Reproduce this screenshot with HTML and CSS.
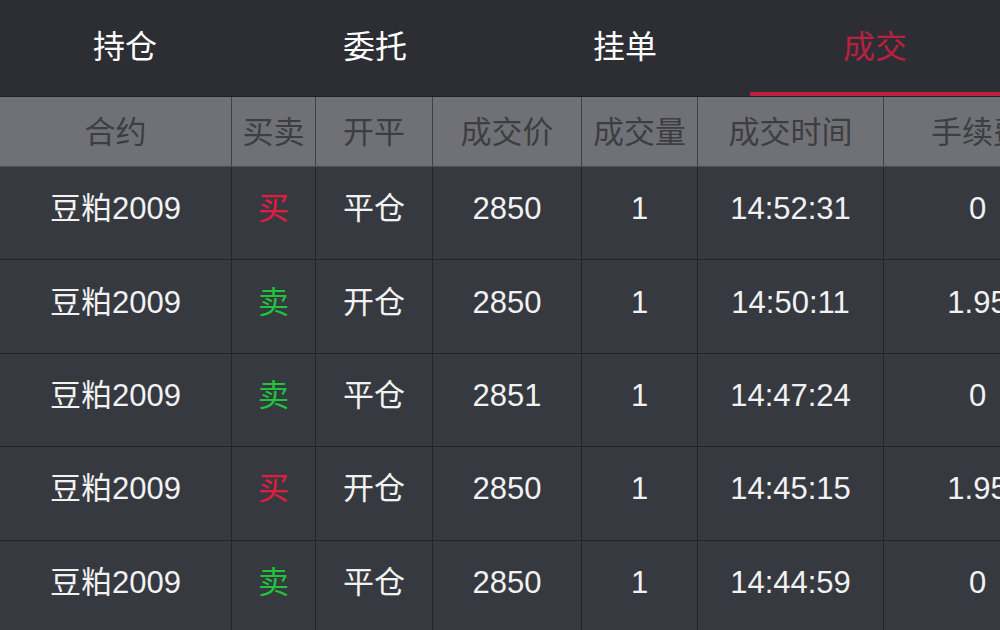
FILE: index.html
```html
<!DOCTYPE html>
<html lang="zh">
<head>
<meta charset="utf-8">
<title>成交</title>
<link rel="stylesheet" href="styles.css">
</head>
<body>
<div class="app">
  <nav class="tabs">
    <div class="tab">持仓</div>
    <div class="tab">委托</div>
    <div class="tab">挂单</div>
    <div class="tab active">成交</div>
  </nav>
  <div class="table">
    <div class="row head">
      <div class="cell">合约</div>
      <div class="cell">买卖</div>
      <div class="cell">开平</div>
      <div class="cell">成交价</div>
      <div class="cell">成交量</div>
      <div class="cell">成交时间</div>
      <div class="cell">手续费</div>
    </div>
    <div class="row">
      <div class="cell">豆粕2009</div>
      <div class="cell buy">买</div>
      <div class="cell">平仓</div>
      <div class="cell">2850</div>
      <div class="cell">1</div>
      <div class="cell">14:52:31</div>
      <div class="cell">0</div>
    </div>
    <div class="row">
      <div class="cell">豆粕2009</div>
      <div class="cell sell">卖</div>
      <div class="cell">开仓</div>
      <div class="cell">2850</div>
      <div class="cell">1</div>
      <div class="cell">14:50:11</div>
      <div class="cell">1.95</div>
    </div>
    <div class="row">
      <div class="cell">豆粕2009</div>
      <div class="cell sell">卖</div>
      <div class="cell">平仓</div>
      <div class="cell">2851</div>
      <div class="cell">1</div>
      <div class="cell">14:47:24</div>
      <div class="cell">0</div>
    </div>
    <div class="row">
      <div class="cell">豆粕2009</div>
      <div class="cell buy">买</div>
      <div class="cell">开仓</div>
      <div class="cell">2850</div>
      <div class="cell">1</div>
      <div class="cell">14:45:15</div>
      <div class="cell">1.95</div>
    </div>
    <div class="row">
      <div class="cell">豆粕2009</div>
      <div class="cell sell">卖</div>
      <div class="cell">平仓</div>
      <div class="cell">2850</div>
      <div class="cell">1</div>
      <div class="cell">14:44:59</div>
      <div class="cell">0</div>
    </div>
  </div>
</div>
</body>
</html>
```
FILE: styles.css
```css
html, body {
  margin: 0;
  padding: 0;
  width: 1000px;
  height: 630px;
  overflow: hidden;
  background: #363940;
}
.app {
  font-family: "Liberation Sans", "Noto Sans CJK SC", sans-serif;
  color: #f2f2f2;
}
.tabs {
  display: flex;
  height: 96px;
  background: #2c2e33;
  border-bottom: 1px solid #1f2125;
}
.tab {
  flex: 0 0 250px;
  box-sizing: border-box;
  display: flex;
  align-items: center;
  justify-content: center;
  font-size: 32px;
  line-height: 40px;
  color: #ffffff;
  border-bottom: 4px solid transparent;
  padding-top: 2px;
}
.tab.active {
  color: #b8213f;
  border-bottom-color: #b8213f;
}
.table {
  width: 1072px;
}
.row {
  display: grid;
  grid-template-columns: 232px 84px 117px 149px 116px 186px 188px;
  height: 93.4px;
  box-sizing: border-box;
  border-bottom: 1px solid #222428;
}
.row.head {
  height: 70px;
  background: #707176;
  border-bottom: 1px solid #4d4e52;
}
.cell {
  box-sizing: border-box;
  border-right: 1px solid #222428;
  display: flex;
  align-items: center;
  justify-content: center;
  font-size: 31px;
  line-height: 36px;
  padding-bottom: 8px;
  white-space: nowrap;
}
.head .cell {
  color: #3d3e42;
  font-size: 31px;
  padding-bottom: 0;
  padding-top: 3px;
  border-right-color: #3e3f43;
}
.buy {
  color: #e51c3f;
}
.sell {
  color: #1fc43b;
}
```
